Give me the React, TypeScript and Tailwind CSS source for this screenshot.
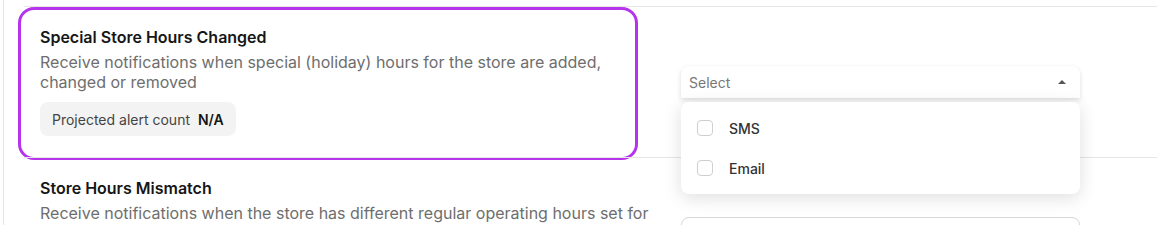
import { useState } from 'react'

interface AlertRowProps {
  title: string
  description: string
  highlighted?: boolean
  open?: boolean
}

const channels = ['SMS', 'Email']

function ChannelSelect({ open }: { open?: boolean }) {
  const [checked, setChecked] = useState<Record<string, boolean>>({})

  if (!open) {
    return (
      <div className="flex h-[32px] w-[399px] items-center justify-between rounded-lg border border-[#d6d6d6] bg-white px-2 text-[14px] text-[#777]">
        Select
        <svg width="8" height="4" viewBox="0 0 8 4" className="mr-[6px] rotate-180">
          <path d="M0 4 L4 0 L8 4 Z" fill="#555" />
        </svg>
      </div>
    )
  }

  return (
    <div className="relative w-[399px]">
      <div className="flex h-[32px] items-center justify-between rounded-t-lg bg-white px-2 text-[14px] text-[#777] shadow-[0_2px_5px_rgba(0,0,0,0.14)]">
        Select
        <svg width="8" height="4" viewBox="0 0 8 4" className="mr-[6px]">
          <path d="M0 4 L4 0 L8 4 Z" fill="#555" />
        </svg>
      </div>
      <div className="absolute left-0 top-[36px] z-10 w-full rounded-lg bg-white py-[6px] shadow-[0_4px_18px_rgba(0,0,0,0.13)]">
        {channels.map((c) => (
          <label key={c} className="flex h-10 cursor-pointer items-center gap-4 px-4">
            <input
              type="checkbox"
              checked={!!checked[c]}
              onChange={() => setChecked((s) => ({ ...s, [c]: !s[c] }))}
              className="h-4 w-4 appearance-none rounded-[4px] border border-[#cfcfcf] bg-white"
            />
            <span className="text-[14px] font-medium text-[#333]">{c}</span>
          </label>
        ))}
      </div>
    </div>
  )
}

function AlertRow({ title, description, highlighted, open }: AlertRowProps) {
  return (
    <div className="relative flex items-center border-t border-[#e6e6e6]">
      {highlighted && (
        <div className="pointer-events-none absolute left-[-6px] top-0 h-[153px] w-[620px] rounded-[16px] border-[3px] border-[#b534ec]" />
      )}
      <div className="w-[657px] shrink-0 pb-[21px] pl-4 pt-[20px]">
        <div className={highlighted ? 'max-w-[590px]' : 'max-w-[630px]'}>
          <h3 className="text-[16px] font-semibold leading-5 text-[#161616]">{title}</h3>
          <p className="mt-[5px] text-[16px] leading-5 text-[#6e6e6e]">{description}</p>
        </div>
        <div className="mt-[10px] inline-flex h-[34px] items-center gap-2 rounded-lg bg-[#f3f3f3] px-3 text-[14px] text-[#444]">
          Projected alert count
          <span className="font-semibold text-[#161616]">N/A</span>
        </div>
      </div>
      <ChannelSelect open={open} />
    </div>
  )
}

export default function App() {
  return (
    <div
      className="h-[225px] w-[1157px] overflow-hidden bg-white"
      style={{ fontFamily: 'Inter, "Noto Sans", sans-serif' }}
    >
      <div className="ml-[3px] h-full border-l border-[#e6e6e6] pl-5 pt-[6px]">
        <AlertRow
          title="Special Store Hours Changed"
          description="Receive notifications when special (holiday) hours for the store are added, changed or removed"
          highlighted
          open
        />
        <AlertRow
          title="Store Hours Mismatch"
          description="Receive notifications when the store has different regular operating hours set for different platforms"
        />
      </div>
    </div>
  )
}
